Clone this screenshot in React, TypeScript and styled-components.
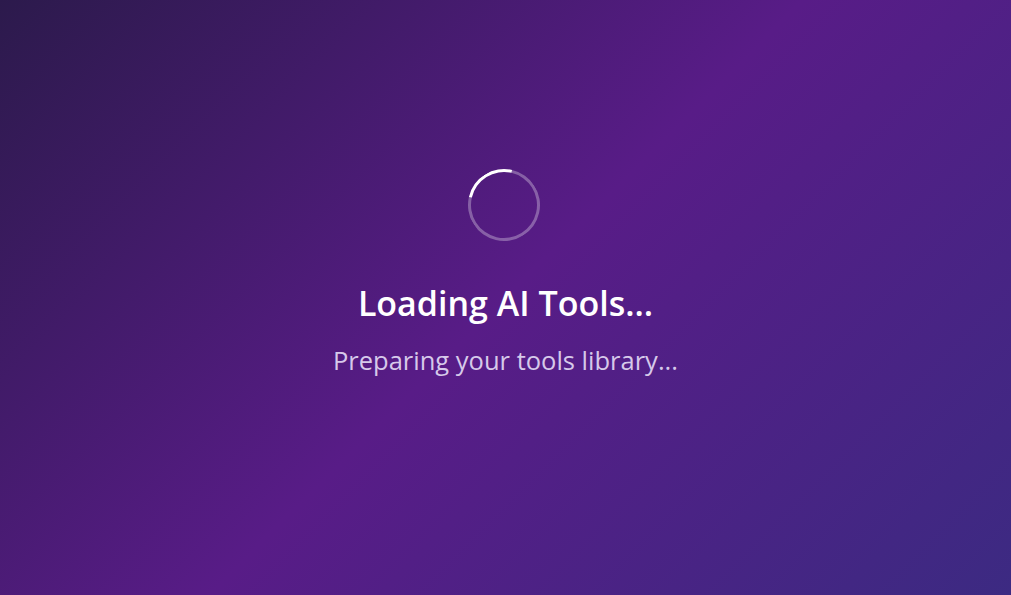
import styled, { createGlobalStyle } from "styled-components";

const GlobalStyle = createGlobalStyle`
    html, body, #root {
        margin: 0;
        padding: 0;
        height: 100%;
    }
    body {
        font-family: "Open Sans", "Noto Sans", "Liberation Sans", sans-serif;
    }
`

const Screen = styled.main`
    box-sizing: border-box;
    min-height: 100vh;
    padding-top: 169px;
    background: linear-gradient(135deg, #2c1a4c 0%, #581c87 50%, #3c2a82 100%);

    display: flex;
    flex-direction: column;
    align-items: center;
`

const Spinner = styled.div`
    box-sizing: border-box;
    width: 72px;
    height: 72px;
    margin-right: 3px;
    border-radius: 50%;
    border: 3px solid rgba(255, 255, 255, 0.3);
    border-top-color: #ffffff;
    transform: rotate(-32deg);
`

const Title = styled.h1`
    margin: 42px 0 0;
    font-size: 34px;
    line-height: 40px;
    font-weight: 600;
    color: #ffffff;
`

const Subtitle = styled.p`
    margin: 21px 0 0;
    font-size: 25.5px;
    line-height: 32px;
    color: #d6c9ea;
`

export default function App() {
    return (
        <>
            <GlobalStyle />
            <Screen>
                <Spinner />
                <Title>Loading AI Tools...</Title>
                <Subtitle>Preparing your tools library...</Subtitle>
            </Screen>
        </>
    )
}
